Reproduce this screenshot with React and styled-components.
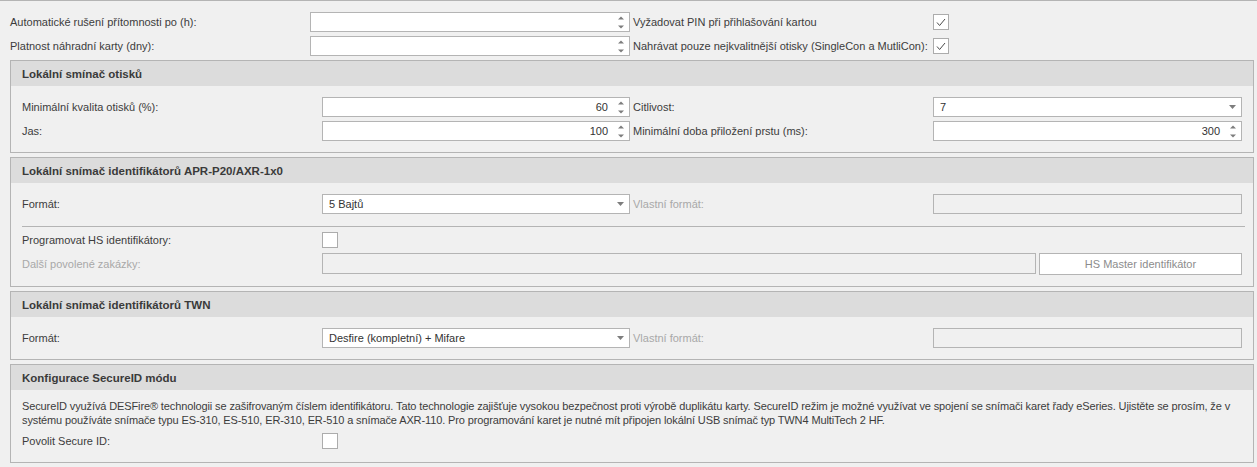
import React from 'react';
import styled, { createGlobalStyle } from 'styled-components';

const GlobalStyle = createGlobalStyle`
  body {
    margin: 0;
    background: #f0f0f0;
    font-family: "Liberation Sans", Arial, sans-serif;
    font-size: 11px;
    color: #3c3c3c;
  }
`;

const Page = styled.div`
  border-top: 1px solid #b4b4b4;
  padding: 0 3px 0 10px;
  height: 466px;
  overflow: hidden;
`;

const FormGrid = styled.div`
  display: grid;
  grid-template-columns: 300px 1fr 303px 309px;
  grid-template-rows: ${(p) => p.$rows || 'none'};
  grid-auto-rows: 20px;
  row-gap: ${(p) => (p.$gap === undefined ? 4 : p.$gap)}px;
  align-items: center;
`;

const TopGrid = styled(FormGrid)`
  padding-top: 11px;
  margin: 0 12px 4px 0;
`;

const Group = styled.section`
  border: 1px solid #b4b4b4;
  margin-bottom: 4px;
`;

const GroupHeader = styled.h2`
  margin: 0;
  height: 25px;
  padding-left: 11px;
  display: flex;
  align-items: center;
  background: #dcdcdc;
  font-size: 11.5px;
  font-weight: bold;
  color: #3a3a3a;
`;

const GroupBody = styled.div`
  padding: ${(p) => p.$pt || 11}px 11px 11px;
`;

const Label = styled.span`
  padding-left: ${(p) => (p.$second ? 3 : 0)}px;
  color: ${(p) => (p.$disabled ? '#a8a8a8' : '#3c3c3c')};
  white-space: nowrap;
`;

const Field = styled.div`
  box-sizing: border-box;
  height: ${(p) => p.$h || 20}px;
  border: 1px solid #b4b4b4;
  background: ${(p) => (p.$disabled ? '#f0f0f0' : '#fff')};
  display: flex;
  align-items: center;
  color: #333;
`;

const WideField = styled(Field)`
  flex: 1;
`;

const FieldValue = styled.span`
  flex: 1;
  padding: 0 ${(p) => (p.$right ? 4 : 6)}px;
  text-align: ${(p) => (p.$right ? 'right' : 'left')};
  white-space: nowrap;
`;

const FieldButton = styled.span`
  width: 17px;
  display: flex;
  justify-content: center;
  align-items: center;
  align-self: stretch;
`;

const CheckBox = styled.span`
  box-sizing: border-box;
  width: 16px;
  height: 16px;
  border: 1px solid #acacac;
  background: #fff;
  display: flex;
  align-items: center;
  justify-content: center;
`;

const Separator = styled.div`
  height: 1px;
  background: #b4b4b4;
  margin: 12px -3px 3px 0;
`;

const WideCell = styled.div`
  grid-column: 2 / 5;
  display: flex;
  gap: 3px;
  align-self: stretch;
`;

const Button = styled.button`
  width: 203px;
  height: 22px;
  border: 1px solid #b4b4b4;
  background: #fff;
  color: #8c8c8c;
  font-family: inherit;
  font-size: 11px;
  padding: 0;
`;

const Description = styled.p`
  margin: 0 0 4px;
  line-height: 14px;
  color: #3c3c3c;
  letter-spacing: -0.12px;
`;

const DescLine = styled.span`
  display: block;
  white-space: nowrap;
`;

const BottomEdge = styled.div`
  margin: 2px 26px 0 18px;
  height: 3px;
  border-top: 1px solid #c8c8c8;
  background: #e8e8e8;
`;

const Spin = () => (
  <FieldButton>
    <svg width="6" height="13" viewBox="0 0 6 13">
      <path d="M0 3.5 L3 0.5 L6 3.5 Z" fill="#7d7d7d" />
      <path d="M0 9.5 L3 12.5 L6 9.5 Z" fill="#7d7d7d" />
    </svg>
  </FieldButton>
);

const Arrow = () => (
  <FieldButton>
    <svg width="7" height="4" viewBox="0 0 7 4">
      <path d="M0 0 L7 0 L3.5 4 Z" fill="#7d7d7d" />
    </svg>
  </FieldButton>
);

const NumberInput = ({ value }) => (
  <Field>
    <FieldValue $right>{value}</FieldValue>
    <Spin />
  </Field>
);

const Select = ({ value }) => (
  <Field>
    <FieldValue>{value}</FieldValue>
    <Arrow />
  </Field>
);

const Check = ({ checked }) => (
  <CheckBox>
    {checked && (
      <svg width="10" height="9" viewBox="0 0 10 9">
        <path d="M1 4.5 L3.6 7.5 L9 1" fill="none" stroke="#4a4a4a" strokeWidth="1" />
      </svg>
    )}
  </CheckBox>
);

export default function App() {
  return (
    <>
      <GlobalStyle />
      <Page>
        <TopGrid>
          <Label>Automatické rušení přítomnosti po (h):</Label>
          <NumberInput value="" />
          <Label $second>Vyžadovat PIN při přihlašování kartou</Label>
          <Check checked />
          <Label>Platnost náhradní karty (dny):</Label>
          <NumberInput value="" />
          <Label $second>Nahrávat pouze nejkvalitnější otisky (SingleCon a MutliCon):</Label>
          <Check checked />
        </TopGrid>

        <Group>
          <GroupHeader>Lokální smínač otisků</GroupHeader>
          <GroupBody>
            <FormGrid>
              <Label>Minimální kvalita otisků (%):</Label>
              <NumberInput value="60" />
              <Label $second>Citlivost:</Label>
              <Select value="7" />
              <Label>Jas:</Label>
              <NumberInput value="100" />
              <Label $second>Minimální doba přiložení prstu (ms):</Label>
              <NumberInput value="300" />
            </FormGrid>
          </GroupBody>
        </Group>

        <Group>
          <GroupHeader>Lokální snímač identifikátorů APR-P20/AXR-1x0</GroupHeader>
          <GroupBody>
            <FormGrid>
              <Label>Formát:</Label>
              <Select value="5 Bajtů" />
              <Label $second $disabled>Vlastní formát:</Label>
              <Field $disabled />
            </FormGrid>
            <Separator />
            <FormGrid $gap={3} $rows="20px 22px">
              <Label>Programovat HS identifikátory:</Label>
              <Check />
              <span />
              <span />
              <Label $disabled>Další povolené zakázky:</Label>
              <WideCell>
                <WideField $disabled $h={21} />
                <Button>HS Master identifikátor</Button>
              </WideCell>
            </FormGrid>
          </GroupBody>
        </Group>

        <Group>
          <GroupHeader>Lokální snímač identifikátorů TWN</GroupHeader>
          <GroupBody>
            <FormGrid>
              <Label>Formát:</Label>
              <Select value="Desfire (kompletní) + Mifare" />
              <Label $second $disabled>Vlastní formát:</Label>
              <Field $disabled />
            </FormGrid>
          </GroupBody>
        </Group>

        <Group>
          <GroupHeader>Konfigurace SecureID módu</GroupHeader>
          <GroupBody $pt={9}>
            <Description>
              <DescLine>
                SecureID využívá DESFire® technologii se zašifrovaným číslem identifikátoru. Tato technologie zajišťuje vysokou bezpečnost proti výrobě duplikátu karty. SecureID režim je možné využívat ve spojení se snímači karet řady eSeries. Ujistěte se prosím, že v
              </DescLine>
              <DescLine>
                systému používáte snímače typu ES-310, ES-510, ER-310, ER-510 a snímače AXR-110. Pro programování karet je nutné mít připojen lokální USB snímač typ TWN4 MultiTech 2 HF.
              </DescLine>
            </Description>
            <FormGrid>
              <Label>Povolit Secure ID:</Label>
              <Check />
            </FormGrid>
          </GroupBody>
        </Group>
        <BottomEdge />
      </Page>
    </>
  );
}
